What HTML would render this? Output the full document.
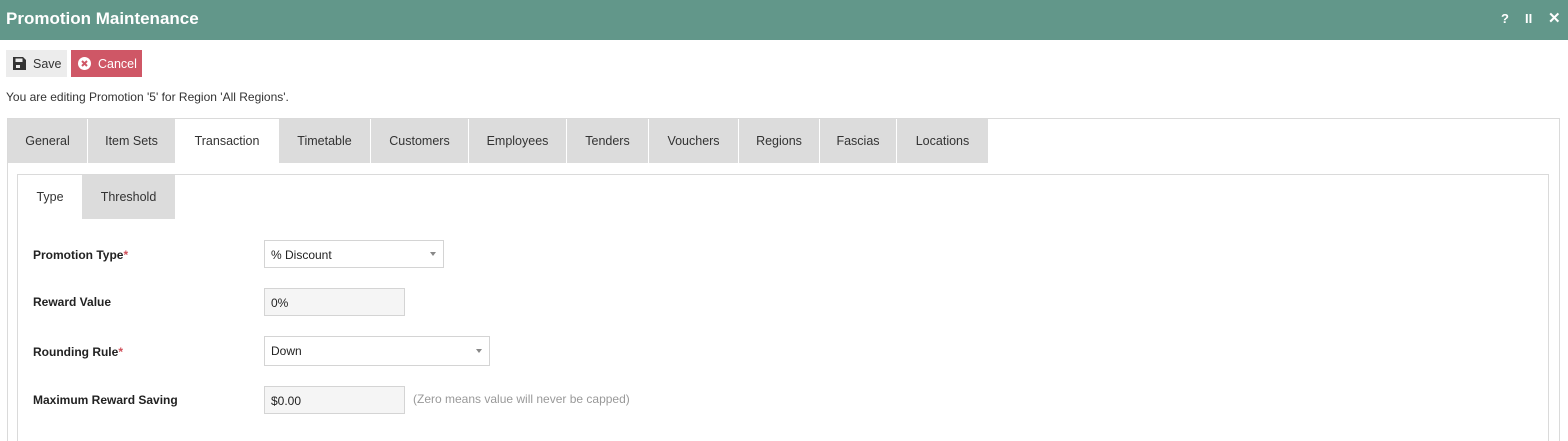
<!DOCTYPE html>
<html><head><style>
*{box-sizing:border-box;margin:0;padding:0}
html,body{width:1568px;height:441px;overflow:hidden}
body{background:#fff;font-family:"Liberation Sans",sans-serif;font-size:12.5px;color:#333}
#w{position:relative;width:1568px;height:441px;overflow:hidden}
.hdr{position:absolute;left:0;top:0;width:1568px;height:40px;background:#62978a;color:#fff}
.hdr .t{position:absolute;left:6px;top:9px;font-size:17px;font-weight:bold}
.hdr .i{position:absolute;top:11px;font-weight:bold;font-size:13px}
.btn{position:absolute;top:50px;height:27px;line-height:27px;font-size:12.5px}
.a{position:absolute}
.tab{position:absolute;top:119px;height:44px;background:#dcdcdc;line-height:45px;text-align:center;font-size:12.5px;color:#333;border-right:1px solid #fff}
.st{position:absolute;top:175px;height:44px;line-height:45px;text-align:center}
.lbl{position:absolute;left:33px;font-weight:bold;font-size:12px;color:#222}
.lbl span{color:#d0505a}
.in{position:absolute;left:264px;height:28px;border:1px solid #d4d4d4;line-height:28px;padding-left:6px;font-size:12px;color:#222}
.arr{position:absolute;top:11px;width:0;height:0;border-left:3.5px solid transparent;border-right:3.5px solid transparent;border-top:4px solid #888}
</style></head><body><div id="w">
<div class="hdr"><div class="t">Promotion Maintenance</div>
<div class="i" style="left:1501px">?</div><div class="i" style="left:1525px">II</div><div class="i" style="left:1548px;font-size:15px;top:9px">✕</div></div>
<div class="btn" style="left:6px;width:61px;background:#ececec;color:#333">
<svg class="a" style="left:7px;top:7px" width="13" height="13" viewBox="0 0 13 13"><path d="M0 0H10L13 3V13H0Z" fill="#333"/><rect x="2.5" y="1.5" width="7" height="3.5" fill="#ececec"/><rect x="3" y="8" width="4" height="3" fill="#ececec"/></svg>
<span class="a" style="left:27px;top:1px">Save</span></div>
<div class="btn" style="left:71px;width:71px;background:#cf5766;color:#fff">
<svg class="a" style="left:7px;top:7px" width="13" height="13" viewBox="0 0 13 13"><circle cx="6.5" cy="6.5" r="6.5" fill="#fff"/><path d="M4 4L9 9M9 4L4 9" stroke="#cf5766" stroke-width="2"/></svg>
<span class="a" style="left:27px;top:1px">Cancel</span></div>
<div class="a" style="left:6px;top:90px;font-size:12px">You are editing Promotion '5' for Region 'All Regions'.</div>
<div class="a" style="left:7px;top:118px;width:1553px;height:400px;border:1px solid #dadada"></div>
<div class="tab" style="left:8px;width:80px">General</div>
<div class="tab" style="left:88px;width:88px">Item Sets</div>
<div class="tab" style="left:176px;width:103px;background:#fff">Transaction</div>
<div class="tab" style="left:279px;width:92px">Timetable</div>
<div class="tab" style="left:371px;width:98px">Customers</div>
<div class="tab" style="left:469px;width:98px">Employees</div>
<div class="tab" style="left:567px;width:82px">Tenders</div>
<div class="tab" style="left:649px;width:90px">Vouchers</div>
<div class="tab" style="left:739px;width:81px">Regions</div>
<div class="tab" style="left:820px;width:77px">Fascias</div>
<div class="tab" style="left:897px;width:91px;border-right:none">Locations</div>
<div class="a" style="left:17px;top:174px;width:1532px;height:400px;border:1px solid #dadada"></div>
<div class="st" style="left:18px;width:64px">Type</div>
<div class="st" style="left:82px;width:93px;background:#dcdcdc">Threshold</div>
<div class="lbl" style="top:248px">Promotion Type<span>*</span></div>
<div class="in" style="top:240px;width:180px">% Discount<div class="arr" style="left:165px"></div></div>
<div class="lbl" style="top:295px">Reward Value</div>
<div class="in" style="top:288px;width:141px;background:#f5f5f5">0%</div>
<div class="lbl" style="top:345px">Rounding Rule<span>*</span></div>
<div class="in" style="top:336px;width:226px;height:30px">Down<div class="arr" style="left:211px;top:12px"></div></div>
<div class="lbl" style="top:393px">Maximum Reward Saving</div>
<div class="in" style="top:386px;width:141px;background:#f5f5f5">$0.00</div>
<div class="a" style="left:413px;top:392px;font-size:12px;color:#999">(Zero means value will never be capped)</div>
</div></body></html>
